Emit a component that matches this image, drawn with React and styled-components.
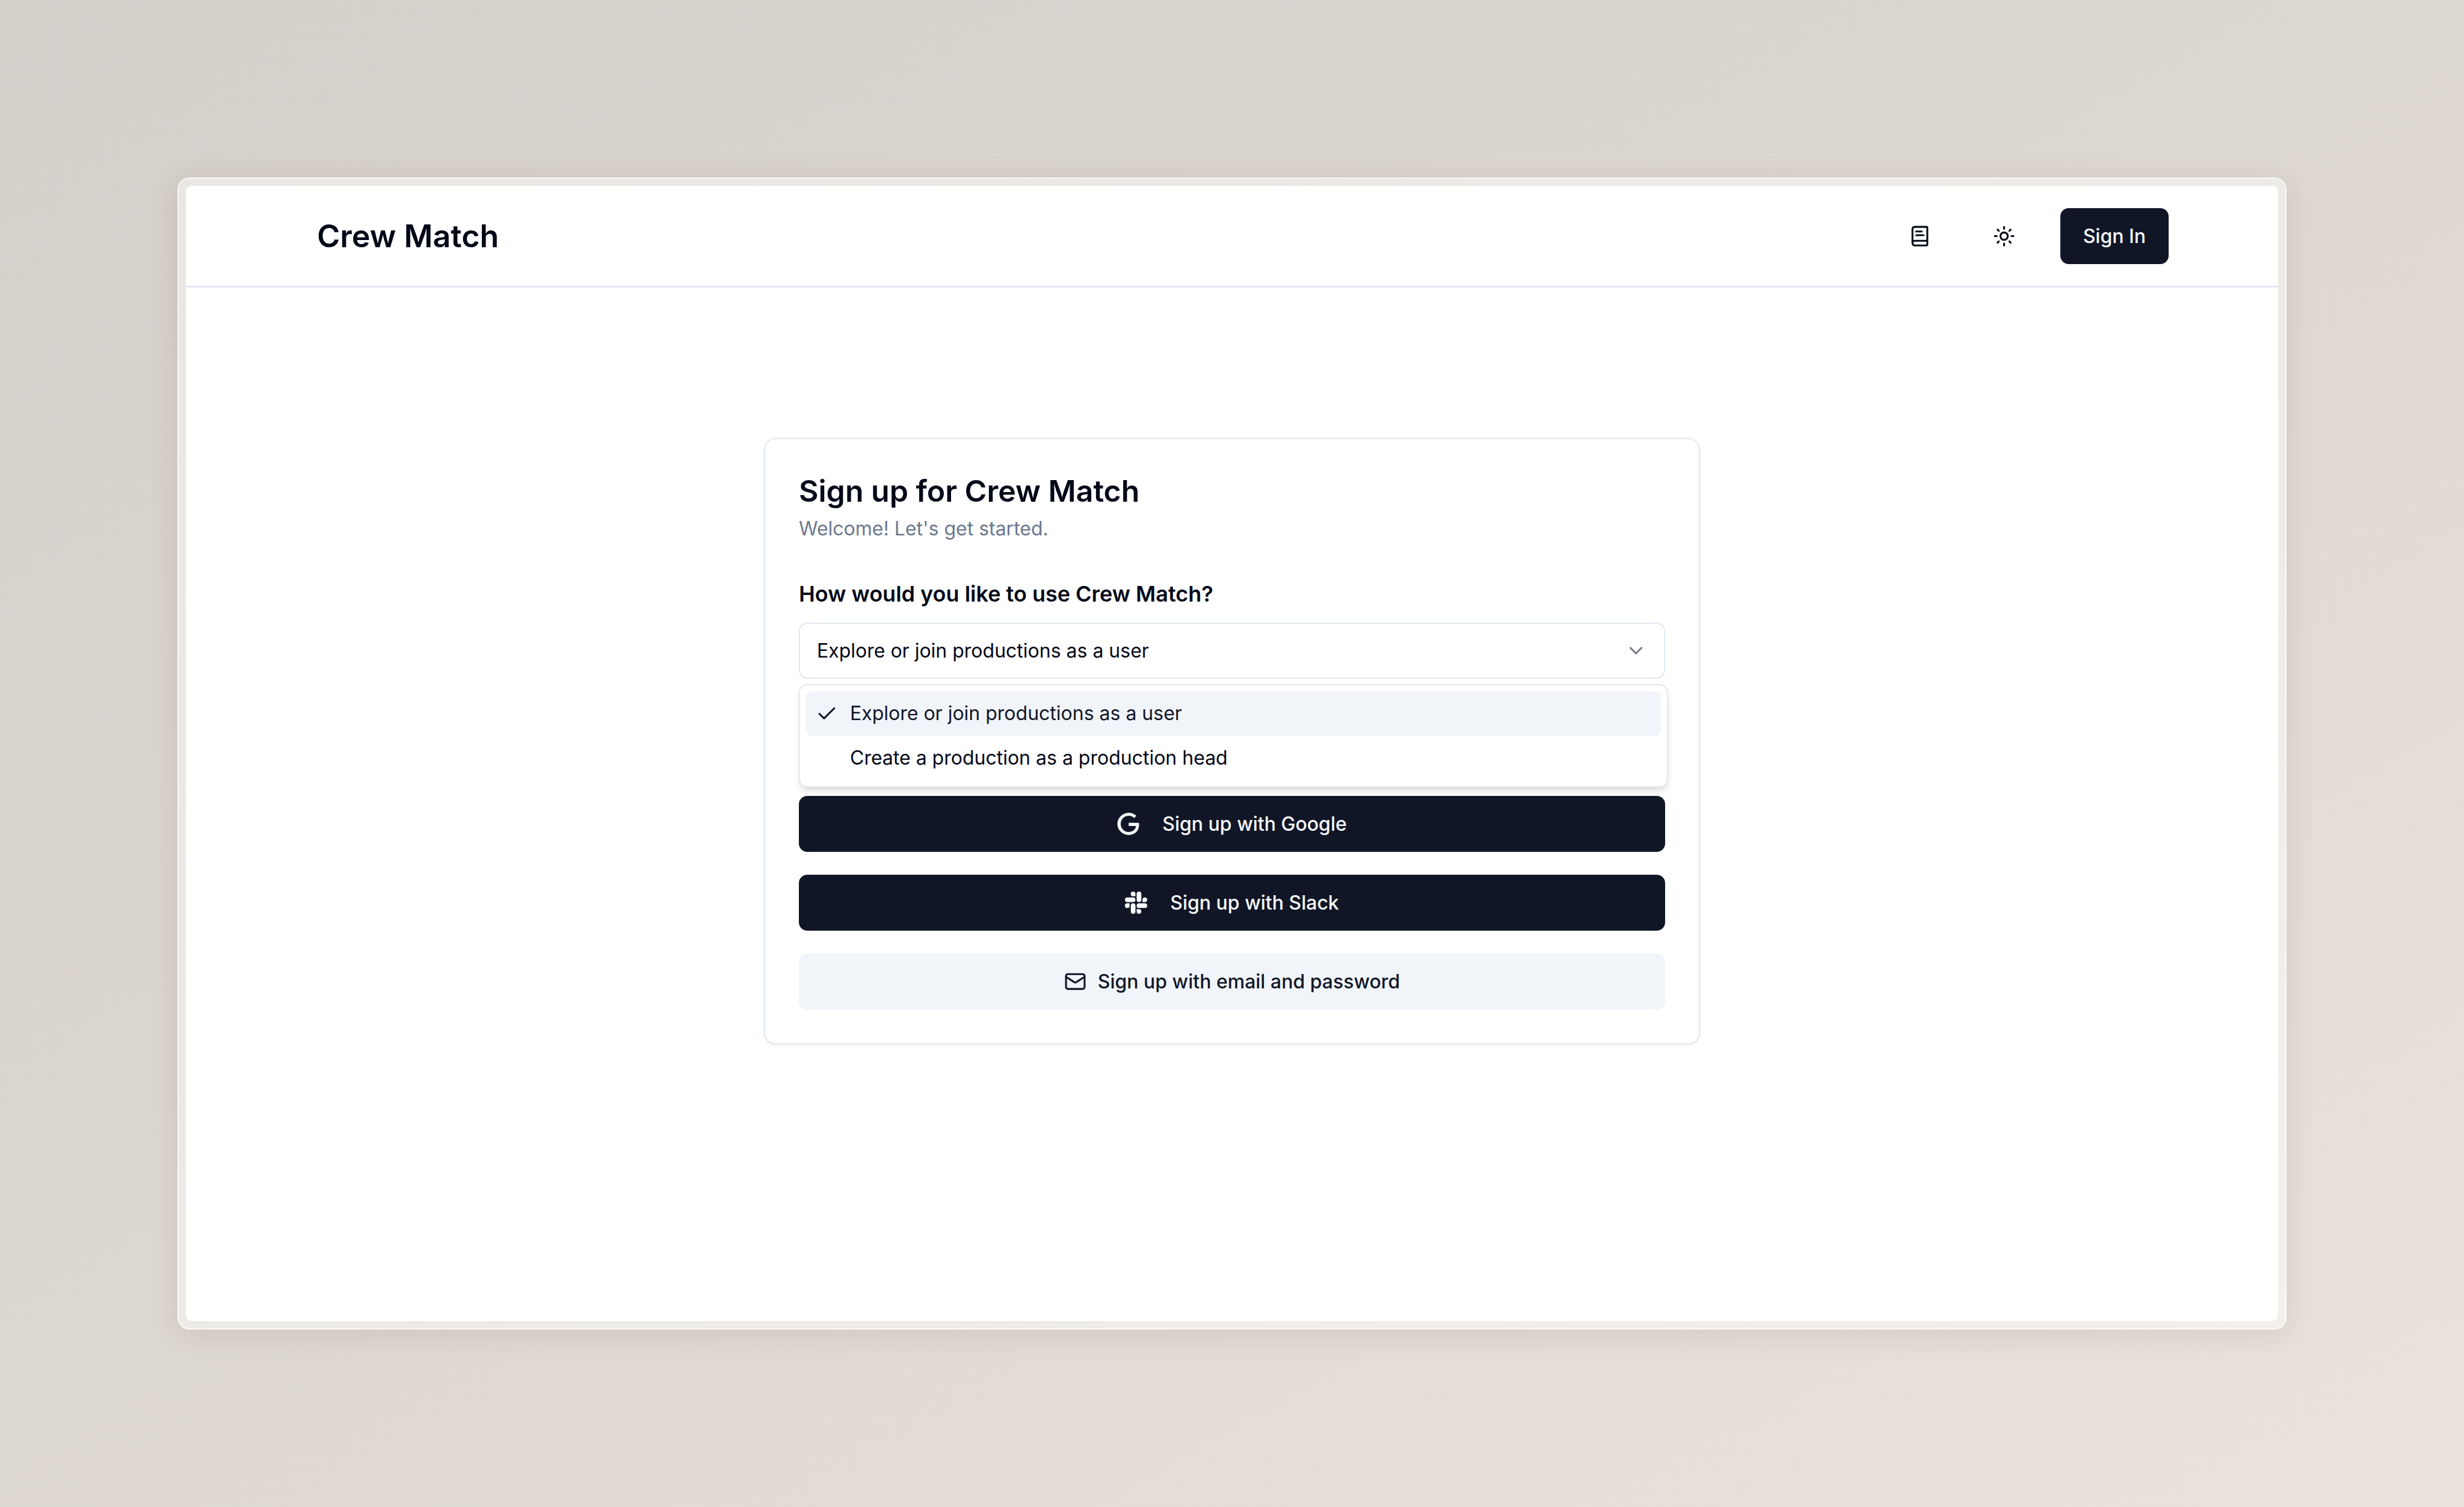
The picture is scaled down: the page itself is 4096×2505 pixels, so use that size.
import React, { useState } from "react";
import styled, { createGlobalStyle, css } from "styled-components";
import { BookText, Check, ChevronDown, Mail, Sun } from "lucide-react";
import { SiSlack } from "react-icons/si";

const color = {
  ink: "#020817",
  primary: "#111627",
  onPrimary: "#f8fafc",
  muted: "#6b788e",
  border: "#e2e8f0",
  accent: "#f1f5fa",
  surface: "#ffffff",
};

const GlobalStyle = createGlobalStyle`
  *, *::before, *::after {
    box-sizing: border-box;
  }
  body {
    margin: 0;
    color: ${color.ink};
    font-family: Inter, "Liberation Sans", sans-serif;
    font-size: 32px;
    line-height: 46px;
  }
  h1, p, ul {
    margin: 0;
    padding: 0;
  }
`;

const Backdrop = styled.div`
  display: flex;
  min-height: 100vh;
  padding: 295px;
  background: linear-gradient(150deg, #d4cfc9 0%, #ddd8d1 50%, #eae3dc 100%);
`;

const Frame = styled.div`
  display: flex;
  flex: 1;
  padding: 12px;
  border: 2px solid rgba(255, 255, 255, 0.85);
  border-radius: 20px;
  background: rgba(255, 255, 255, 0.48);
  background-clip: padding-box;
  box-shadow: 0 8px 50px rgba(60, 40, 30, 0.11);
`;

const Screen = styled.div`
  display: flex;
  flex: 1;
  flex-direction: column;
  overflow: hidden;
  border-radius: 10px;
  background: ${color.surface};
`;

const Header = styled.header`
  display: flex;
  align-items: center;
  justify-content: space-between;
  padding: 37px 182px 36px 218px;
  border-bottom: 3px solid ${color.border};
`;

const Brand = styled.a`
  color: inherit;
  font-size: 52px;
  font-weight: 600;
  line-height: 64px;
  text-decoration: none;
`;

const Nav = styled.nav`
  display: flex;
  align-items: center;
  gap: 47px;
`;

const Button = styled.button`
  display: flex;
  align-items: center;
  justify-content: center;
  gap: ${(p) => (p.$wide ? "38px" : "19px")};
  height: 93px;
  padding: 0 38px;
  border: 0;
  border-radius: 14px;
  font: inherit;
  font-weight: 500;
  cursor: pointer;
  ${(p) =>
    p.$secondary
      ? css`
          background: ${color.accent};
          color: ${color.primary};
        `
      : css`
          background: ${color.primary};
          color: ${color.onPrimary};
        `}
`;

const IconButton = styled.button`
  display: grid;
  place-items: center;
  width: 93px;
  height: 93px;
  padding: 0;
  border: 0;
  border-radius: 14px;
  background: transparent;
  color: inherit;
  cursor: pointer;
`;

const Main = styled.main`
  display: flex;
  flex: 1;
  align-items: flex-start;
  justify-content: center;
  padding: 250px 56px 56px;
`;

const Card = styled.section`
  width: 100%;
  max-width: 1556px;
  padding: 56px;
  border: 2px solid ${color.border};
  border-radius: 19px;
  background: ${color.surface};
  box-shadow: 0 2px 5px rgba(0, 0, 0, 0.06);
`;

const CardHeader = styled.div`
  display: flex;
  flex-direction: column;
  gap: 10px;
  padding-bottom: 56px;
`;

const Title = styled.h1`
  font-size: 50px;
  font-weight: 600;
  line-height: 60px;
`;

const Subtitle = styled.p`
  color: ${color.muted};
`;

const Field = styled.div`
  display: flex;
  flex-direction: column;
  gap: 19px;
`;

const Label = styled.label`
  font-size: 36px;
  font-weight: 600;
  line-height: 58px;
`;

const SelectBox = styled.div`
  position: relative;
  display: grid;
  align-items: center;
`;

const Select = styled.select`
  grid-area: 1 / 1;
  width: 100%;
  height: 93px;
  padding: 0 28px;
  border: 2px solid ${color.border};
  border-radius: 14px;
  outline: 0;
  background: transparent;
  color: inherit;
  font: inherit;
  appearance: none;
`;

const SelectArrow = styled(ChevronDown)`
  grid-area: 1 / 1;
  justify-self: end;
  margin-right: 30px;
  opacity: 0.5;
  pointer-events: none;
`;

const Menu = styled.ul`
  position: absolute;
  z-index: 1;
  top: calc(100% + 9px);
  left: 0;
  right: -5px;
  padding: 10px;
  border: 2px solid ${color.border};
  border-radius: 14px;
  background: ${color.surface};
  box-shadow:
    0 9px 14px -2px rgba(0, 0, 0, 0.1),
    0 5px 9px -5px rgba(0, 0, 0, 0.1);
  list-style: none;
`;

const MenuItem = styled.li`
  display: flex;
  align-items: center;
  gap: 20px;
  height: 74px;
  padding: 0 16px;
  border-radius: 9px;
  background: ${(p) => (p.$active ? color.accent : "transparent")};
  color: ${(p) => (p.$active ? color.primary : "inherit")};
  cursor: default;
`;

const MenuMark = styled.span`
  display: flex;
  width: 37px;
  height: 37px;
`;

const Actions = styled.div`
  display: flex;
  flex-direction: column;
  gap: 38px;
  padding-top: 195px;
`;

const GoogleLogo = () => (
  <svg width="37" height="37" viewBox="0 0 24 24" fill="currentColor" aria-hidden="true">
    <path d="M12.48 10.92v3.28h7.84c-.24 1.84-.853 3.187-1.787 4.133-1.147 1.147-2.933 2.4-6.053 2.4-4.827 0-8.6-3.893-8.6-8.72s3.773-8.72 8.6-8.72c2.6 0 4.507 1.027 5.907 2.347l2.307-2.307C18.747 1.44 16.133 0 12.48 0 5.867 0 .307 5.387.307 12s5.56 12 12.173 12c3.573 0 6.267-1.173 8.373-3.36 2.16-2.16 2.84-5.213 2.84-7.667 0-.76-.053-1.467-.173-2.053H12.48z" />
  </svg>
);

const ROLES = [
  { value: "user", label: "Explore or join productions as a user" },
  { value: "head", label: "Create a production as a production head" },
];

function RoleSelect() {
  const [role, setRole] = useState("user");
  return (
    <Field>
      <Label htmlFor="role">How would you like to use Crew Match?</Label>
      <SelectBox>
        <Select id="role" value={role} onChange={(e) => setRole(e.target.value)}>
          {ROLES.map((r) => (
            <option key={r.value} value={r.value}>
              {r.label}
            </option>
          ))}
        </Select>
        <SelectArrow size={37} aria-hidden="true" />
        <Menu role="listbox" aria-label="Account role">
          {ROLES.map((r) => (
            <MenuItem
              key={r.value}
              role="option"
              aria-selected={r.value === role}
              $active={r.value === role}
              onClick={() => setRole(r.value)}
            >
              <MenuMark>{r.value === role && <Check size={37} />}</MenuMark>
              {r.label}
            </MenuItem>
          ))}
        </Menu>
      </SelectBox>
    </Field>
  );
}

export default function App() {
  return (
    <>
      <GlobalStyle />
      <Backdrop>
        <Frame>
          <Screen>
            <Header>
              <Brand href="#">Crew Match</Brand>
              <Nav>
                <IconButton type="button" aria-label="Documentation">
                  <BookText size={37} />
                </IconButton>
                <IconButton type="button" aria-label="Toggle theme">
                  <Sun size={37} />
                </IconButton>
                <Button type="button">Sign In</Button>
              </Nav>
            </Header>
            <Main>
              <Card>
                <CardHeader>
                  <Title>Sign up for Crew Match</Title>
                  <Subtitle>Welcome! Let's get started.</Subtitle>
                </CardHeader>
                <RoleSelect />
                <Actions>
                  <Button type="button" $wide>
                    <GoogleLogo />
                    Sign up with Google
                  </Button>
                  <Button type="button" $wide>
                    <SiSlack size={37} aria-hidden="true" />
                    Sign up with Slack
                  </Button>
                  <Button type="button" $secondary>
                    <Mail size={37} aria-hidden="true" />
                    Sign up with email and password
                  </Button>
                </Actions>
              </Card>
            </Main>
          </Screen>
        </Frame>
      </Backdrop>
    </>
  );
}
